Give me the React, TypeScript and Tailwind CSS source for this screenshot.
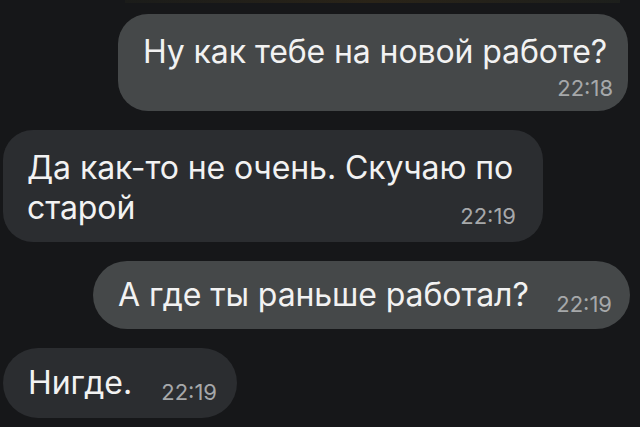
export default function App() {
  return (
    <main
      className="w-[640px] h-[427px] overflow-hidden bg-[#161719] text-[#f2f2f2] flex flex-col"
      style={{ fontFamily: 'Inter, Roboto, "Noto Sans", sans-serif' }}
    >
      <div className="h-[3px] ml-[125px] mr-[20px] bg-gradient-to-r from-[#1b1c1a] via-[#2a2418] to-[#1d1f1c]" />

      <div className="flex flex-col gap-[19px] pt-[11px]">
        {/* outgoing */}
        <div className="flex justify-end pr-[12px]">
          <div className="w-[510px] h-[97px] rounded-[30px] bg-[#454849] pl-[25px] pr-[15px] pt-[19px] flex flex-col">
            <span className="text-[32px] leading-[38px] tracking-[-0.1px]">Ну как тебе на новой работе?</span>
            <span className="self-end text-[22px] leading-[22px] text-[#a6a8aa] mt-[6px]">22:18</span>
          </div>
        </div>

        {/* incoming */}
        <div className="flex justify-start pl-[3px]">
          <div className="w-[540px] h-[112px] rounded-[30px] bg-[#2b2d30] pl-[24px] pr-[27px] pt-[16px]">
            <div className="text-[32px] leading-[43px] tracking-[-0.1px]">Да как-то не очень. Скучаю по</div>
            <div className="flex items-end justify-between">
              <span className="text-[32px] leading-[38px] tracking-[-0.1px]">старой</span>
              <span className="text-[22px] leading-[22px] text-[#a6a8aa] mb-[0px]">22:19</span>
            </div>
          </div>
        </div>

        {/* outgoing */}
        <div className="flex justify-end pr-[10px]">
          <div className="w-[537px] h-[68px] rounded-[34px] bg-[#454849] pl-[25px] pr-[18px] flex items-center justify-between">
            <span className="text-[32px] leading-[38px] tracking-[-0.1px]">А где ты раньше работал?</span>
            <span className="text-[22px] leading-[22px] text-[#a6a8aa] mt-[18px]">22:19</span>
          </div>
        </div>

        {/* incoming */}
        <div className="flex justify-start pl-[3px]">
          <div className="w-[234px] h-[70px] rounded-[35px] bg-[#2b2d30] pl-[25px] pr-[20px] flex items-center justify-between">
            <span className="text-[32px] leading-[38px] tracking-[-0.1px]">Нигде.</span>
            <span className="text-[22px] leading-[22px] text-[#a6a8aa] mt-[18px]">22:19</span>
          </div>
        </div>
      </div>
    </main>
  );
}
